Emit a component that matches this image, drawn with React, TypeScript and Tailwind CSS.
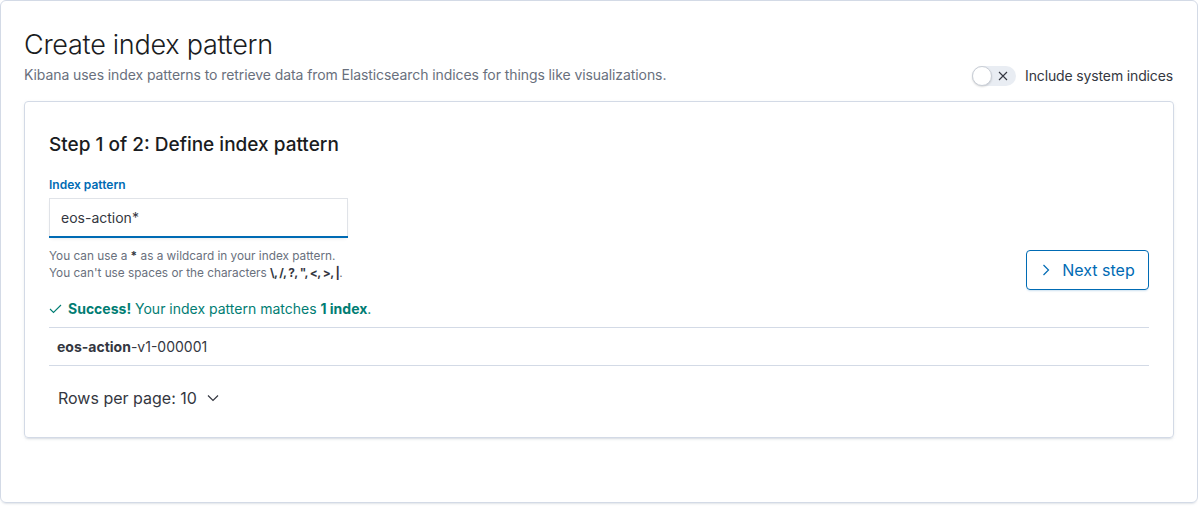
import React from "react";

export default function App() {
  return (
    <div className="w-[1198px] h-[506px] bg-white font-['Inter',sans-serif] text-[#343741] overflow-hidden">
      <div className="w-[1198px] h-[503px] border border-[#d3dae6] rounded-[6px] shadow-[0_2px_2px_-1px_rgba(152,162,179,0.3)] px-[23px]">
        {/* Header */}
        <div className="flex items-end justify-between pt-[24px] pr-[1px]">
          <div>
            <h1 className="text-[27px] leading-[40px] font-light text-[#1a1c21] tracking-[-0.01em]">
              Create index pattern
            </h1>
            <p className="text-[14px] leading-[20px] text-[#69707d] tracking-[-0.006em]">
              Kibana uses index patterns to retrieve data from Elasticsearch indices for things like visualizations.
            </p>
          </div>
          <div className="flex items-center gap-[9px] mb-[-1px]">
            <div className="relative w-[44px] h-[20px] rounded-full bg-[#e9edf3] flex items-center">
              <div className="absolute left-0 top-0 w-[20px] h-[20px] rounded-full bg-white border border-[#c9ced6] shadow-[0_1px_2px_rgba(0,0,0,0.15)]" />
              <svg className="absolute left-[26px] top-[5px]" width="10" height="10" viewBox="0 0 10 10">
                <path d="M1 1 L9 9 M9 1 L1 9" stroke="#343741" strokeWidth="1.1" fill="none" />
              </svg>
            </div>
            <span className="text-[14px] leading-[20px] text-[#343741] tracking-[-0.01em]">Include system indices</span>
          </div>
        </div>

        {/* Card */}
        <div className="mt-[16px] h-[337px] border border-[#d3dae6] rounded-[4px] shadow-[0_2px_2px_-1px_rgba(152,162,179,0.3),0_1px_5px_-2px_rgba(152,162,179,0.3)] p-6">
          <h2 className="text-[19px] leading-[34px] font-medium text-[#1a1c21] mt-[2px]">
            Step 1 of 2: Define index pattern
          </h2>
          <div className="flex items-end justify-between mt-[15px]">
            <div>
              <label className="block text-[12px] leading-[16px] font-semibold text-[#006bb4]">Index pattern</label>
              <div className="mt-[5px] w-[299px] h-[40px] bg-white border border-[#e0e3e8] border-b-0 shadow-[0_2px_4px_-2px_rgba(0,0,0,0.12)] relative">
                <div className="pl-[11px] text-[14px] leading-[38px] text-[#343741]">eos-action*</div>
                <div className="absolute left-[-1px] right-[-1px] bottom-0 h-[2px] bg-[#006bb4]" />
              </div>
              <div className="mt-[10px] text-[11.8px] leading-[17px] text-[#69707d]">
                <div>
                  You can use a <strong className="text-[#343741] font-bold">*</strong> as a wildcard in your index pattern.
                </div>
                <div>
                  You can't use spaces or the characters{" "}
                  <strong className="text-[#343741] font-bold tracking-[-0.045em]">\, /, ?, ", &lt;, &gt;, |</strong>.
                </div>
              </div>
            </div>
            <button className="mb-[-8px] w-[123px] h-[40px] rounded-[4px] border border-[#006bb4] text-[#006bb4] flex items-center justify-center gap-[12px] text-[16px] shadow-[0_2px_2px_-1px_rgba(0,107,180,0.2)]">
              <svg width="8" height="12" viewBox="0 0 8 12" className="ml-[2px]">
                <path d="M1.5 1 L6.5 6 L1.5 11" stroke="#006bb4" strokeWidth="1.2" fill="none" />
              </svg>
              <span>Next step</span>
            </button>
          </div>

          <div className="mt-[17px] flex items-center gap-[6px] text-[14px] leading-[20px] text-[#017d73]">
            <svg width="13" height="10" viewBox="0 0 13 10">
              <path d="M1 5 L4.5 8.5 L12 1" stroke="#017d73" strokeWidth="1.1" fill="none" />
            </svg>
            <span>
              <strong className="font-bold">Success!</strong> Your index pattern matches <strong className="font-bold">1 index</strong>.
            </span>
          </div>

          <div className="mt-[8px] border-t border-b border-[#d3dae6] h-[39px] flex items-center px-[8px] text-[14px] text-[#343741]">
            <strong className="font-bold">eos-action</strong>
            <span>-v1-000001</span>
          </div>

          <div className="mt-[20px] flex items-center gap-[10px] px-[9px] text-[16px] leading-[24px] text-[#343741]">
            <span>Rows per page: 10</span>
            <svg width="12" height="8" viewBox="0 0 12 8">
              <path d="M1 1.5 L6 6.5 L11 1.5" stroke="#343741" strokeWidth="1.2" fill="none" />
            </svg>
          </div>
        </div>
      </div>
    </div>
  );
}
